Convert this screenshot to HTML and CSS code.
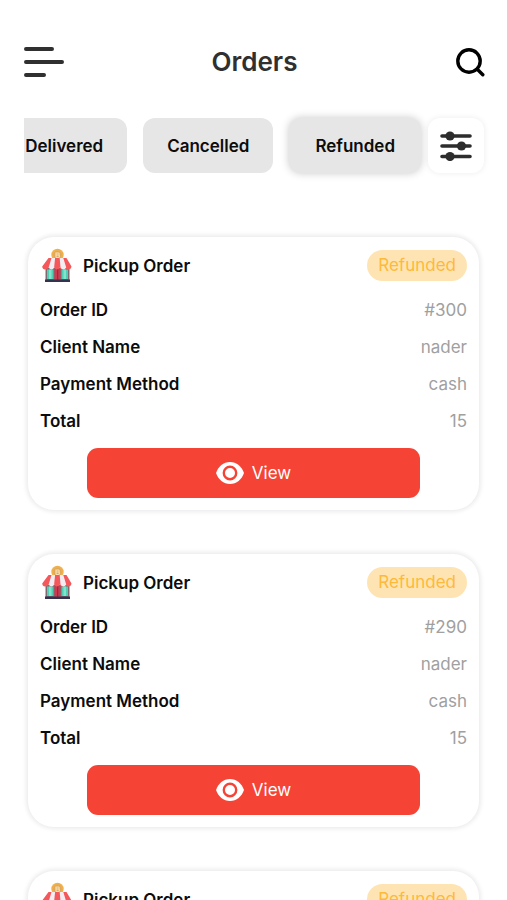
FILE: index.html
```html
<!DOCTYPE html>
<html lang="en">
<head>
  <meta charset="utf-8">
  <meta name="viewport" content="width=device-width, initial-scale=1">
  <title>Orders</title>
  <link rel="stylesheet" href="styles.css">
</head>
<body>
  <svg class="sprite" aria-hidden="true">
    <symbol id="store" viewBox="-3 0 32 37">
      <circle cx="14.500" cy="8" r="6.200" fill="#f0b04c"/>
      <circle cx="14.500" cy="8" r="4.200" fill="#dfa95c"/>
      <path d="M13 5.500v5M13 6h2.500q1.500 1 0 2H13h2.500q2 1.300 0 2.500H13" fill="none" stroke="#f8dfb0" stroke-width="1.200"/>
      <path d="M2.500 21h24v12h-24z" fill="#7d6a70"/>
      <path d="M4 22.500h6.500V32H4zM18.500 22.500H25V32h-6.500z" fill="#4fd0b5"/>
      <path d="M6 22.500h2.500V32H6zM20.500 22.500H23V32h-2.500z" fill="#83e3cd"/>
      <path d="M11.500 21.500h6V33h-6z" fill="#cf3a50"/>
      <path d="M14.200 21.500h1V33h-1z" fill="#7b3040"/>
      <path d="M5.500 11h18l5 8.500q-.5 3-3 3t-3-2q-1 2-3.200 2t-2.600-2q-.7 2-2.700 2t-2.600-2q-1 2-3 2t-2.900-2q-1 2-3.500 2t-2.800-3z" fill="#f4585a"/>
      <path d="M8.500 11h3.600l-1 9.500q-1 2-2.500 2t-2.900-2zM16.700 11h3.600l2.900 9.500q-1 2-2.800 2t-2.900-2z" fill="#f2edf3"/>
      <path d="M2 32.500h25V35H2z" fill="#34334f"/>
    </symbol>
    <symbol id="eye" viewBox="0 0 28 22">
      <path d="M14 0C7.500 0 2.200 4.500 0 11c2.200 6.500 7.500 11 14 11s11.800-4.500 14-11C25.800 4.500 20.500 0 14 0z" fill="#fff"/>
      <circle cx="14" cy="11" r="6.200" fill="none" stroke="#f54335" stroke-width="2.400"/>
    </symbol>
  </svg>

  <header class="topbar">
    <button class="icon-button" type="button" aria-label="Menu">
      <svg width="40" height="32" viewBox="0 0 40 32" fill="none" stroke="#303030" stroke-width="4" stroke-linecap="round">
        <path d="M2 3h26M2 16h36M2 29h18"/>
      </svg>
    </button>
    <h1 class="title">Orders</h1>
    <button class="icon-button" type="button" aria-label="Search">
      <svg width="30" height="30" viewBox="0 0 30 30" fill="none" stroke="#000" stroke-width="3.400" stroke-linecap="round">
        <circle cx="14" cy="14" r="11.200"/>
        <path d="M22.300 22.300l5.500 5.500"/>
      </svg>
    </button>
  </header>

  <nav class="filters" aria-label="Order status">
    <div class="chips">
      <button class="chip" type="button">Delivered</button>
      <button class="chip" type="button">Cancelled</button>
      <button class="chip chip-active" type="button" aria-pressed="true">Refunded</button>
    </div>
    <button class="filter-button" type="button" aria-label="Filter">
      <svg width="32" height="30" viewBox="0 0 32 30" fill="#2d2d2d" stroke="#2d2d2d" stroke-width="3.600" stroke-linecap="round">
        <path d="M2 5h28M2 15h28M2 25.500h28"/>
        <g stroke="none"><circle cx="10" cy="5" r="4.600"/><circle cx="21.500" cy="15" r="4.600"/><circle cx="10" cy="25.500" r="4.600"/></g>
      </svg>
    </button>
  </nav>

  <main class="orders">
    <article class="card">
      <header class="card-head">
        <svg class="store-icon" aria-hidden="true"><use href="#store"/></svg>
        <h2 class="card-title">Pickup Order</h2>
        <span class="badge">Refunded</span>
      </header>
      <dl class="details">
        <div class="row"><dt>Order ID</dt><dd>#300</dd></div>
        <div class="row"><dt>Client Name</dt><dd>nader</dd></div>
        <div class="row"><dt>Payment Method</dt><dd>cash</dd></div>
        <div class="row"><dt>Total</dt><dd>15</dd></div>
      </dl>
      <button class="view-button" type="button"><svg class="eye-icon" aria-hidden="true"><use href="#eye"/></svg>View</button>
    </article>

    <article class="card">
      <header class="card-head">
        <svg class="store-icon" aria-hidden="true"><use href="#store"/></svg>
        <h2 class="card-title">Pickup Order</h2>
        <span class="badge">Refunded</span>
      </header>
      <dl class="details">
        <div class="row"><dt>Order ID</dt><dd>#290</dd></div>
        <div class="row"><dt>Client Name</dt><dd>nader</dd></div>
        <div class="row"><dt>Payment Method</dt><dd>cash</dd></div>
        <div class="row"><dt>Total</dt><dd>15</dd></div>
      </dl>
      <button class="view-button" type="button"><svg class="eye-icon" aria-hidden="true"><use href="#eye"/></svg>View</button>
    </article>

    <article class="card">
      <header class="card-head">
        <svg class="store-icon" aria-hidden="true"><use href="#store"/></svg>
        <h2 class="card-title">Pickup Order</h2>
        <span class="badge">Refunded</span>
      </header>
    </article>
  </main>
</body>
</html>
```
FILE: styles.css
```css
* {
  box-sizing: border-box;
}

body {
  margin: 0;
  height: 100vh;
  display: flex;
  flex-direction: column;
  overflow: hidden;
  background: #fff;
  color: #0c0c0c;
  font-family: Inter, "Liberation Sans", sans-serif;
  font-size: 17px;
}

button {
  border: 0;
  padding: 0;
  background: none;
  color: inherit;
  font: inherit;
}

h1,
h2,
dl,
dd {
  margin: 0;
}

.sprite {
  position: absolute;
  width: 0;
  height: 0;
}

.topbar {
  display: grid;
  grid-template-columns: 1fr auto 1fr;
  align-items: center;
  padding: 42px 22px 0 24px;
}

.icon-button {
  display: flex;
  justify-self: start;
}

.icon-button:last-child {
  justify-self: end;
}

.title {
  color: #303030;
  font-size: 26px;
  font-weight: 600;
  line-height: 40px;
}

.filters {
  display: flex;
  align-items: center;
  padding: 20px 23px 0 24px;
}

.chips {
  flex: 1;
  min-width: 0;
  display: flex;
  justify-content: flex-end;
  gap: 16px;
  padding: 16px 7px 16px 0;
  overflow: hidden;
}

.chip {
  flex: none;
  height: 55px;
  padding: 0 24px;
  border-radius: 12px;
  background: #e6e6e6;
  font-weight: 600;
}

.chip-active {
  padding: 0 26px;
  box-shadow: 0 0 8px rgba(0, 0, 0, 0.22);
}

.filter-button {
  flex: none;
  display: flex;
  align-items: center;
  justify-content: center;
  width: 56px;
  height: 55px;
  border-radius: 12px;
  background: #fff;
  box-shadow: 0 0 6px rgba(0, 0, 0, 0.08);
}

.orders {
  flex: 1;
  min-height: 0;
  display: flex;
  flex-direction: column;
  gap: 44px;
  padding: 48px 28px 0;
  overflow: hidden;
}

.card {
  flex: none;
  display: flex;
  flex-direction: column;
  padding: 10px 12px 12px;
  border-radius: 26px;
  background: #fff;
  box-shadow: 0 0 4px 2px rgba(0, 0, 0, 0.08);
}

.card-head {
  display: flex;
  align-items: center;
  gap: 11px;
  height: 37px;
}

.store-icon {
  width: 32px;
  height: 37px;
}

.card-title {
  flex: 1;
  font-size: 17px;
  font-weight: 600;
}

.badge {
  padding: 0 11px;
  border-radius: 16px;
  background: #ffe4b3;
  color: #fdb93a;
  line-height: 31px;
}

.details {
  padding: 8px 0;
}

.row {
  display: flex;
  justify-content: space-between;
  line-height: 37px;
}

.row dt {
  font-weight: 600;
}

.row dd {
  color: #a0a0a0;
}

.view-button {
  display: flex;
  align-items: center;
  justify-content: center;
  gap: 8px;
  align-self: center;
  width: 78%;
  height: 50px;
  border-radius: 11px;
  background: #f54335;
  color: #fff;
}

.eye-icon {
  width: 28px;
  height: 22px;
}
```
